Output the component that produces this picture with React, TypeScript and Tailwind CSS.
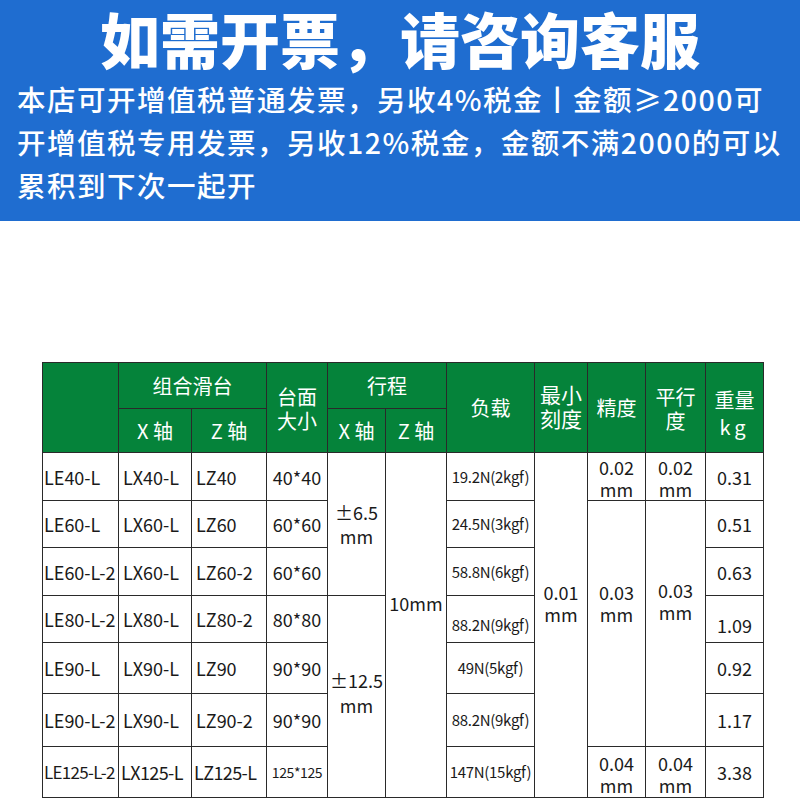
import React from "react";

const cjk = "font-['Noto_Sans_CJK_SC','Noto_Sans',sans-serif]";

function H({ className = "", children }: { className?: string; children?: React.ReactNode }) {
  return (
    <div
      className={`flex flex-col items-center justify-center text-center border-r border-b border-[#2a2a2a] bg-[#05833a] leading-[24px] text-white ${className}`}
    >
      {children}
    </div>
  );
}

function C({
  className = "",
  size = "text-[18px]",
  children,
}: {
  className?: string;
  size?: string;
  children?: React.ReactNode;
}) {
  return (
    <div
      className={`flex flex-col justify-center whitespace-nowrap border-r border-b border-[#2a2a2a] bg-white leading-[22px] text-[#1a1a1a] ${size} ${className}`}
    >
      {children}
    </div>
  );
}

const rows = [
  ["LE40-L", "LX40-L", "LZ40", "40*40"],
  ["LE60-L", "LX60-L", "LZ60", "60*60"],
  ["LE60-L-2", "LX60-L", "LZ60-2", "60*60"],
  ["LE80-L-2", "LX80-L", "LZ80-2", "80*80"],
  ["LE90-L", "LX90-L", "LZ90", "90*90"],
  ["LE90-L-2", "LX90-L", "LZ90-2", "90*90"],
  ["LE125-L-2", "LX125-L", "LZ125-L", "125*125"],
];

function Model({ r }: { r: string[] }) {
  const long = r[0].length > 8;
  return (
    <>
      <C
        size={long ? "text-[17px]" : "text-[18px]"}
        className={long ? "items-start pl-[1px] tracking-[-0.7px]" : "items-start pl-[1px]"}
      >
        {r[0]}
      </C>
      <C className={long ? "items-start pl-[2px] tracking-[-0.6px]" : "items-start pl-[4px]"}>{r[1]}</C>
      <C className={long ? "items-start pl-[2px] tracking-[-0.6px]" : "items-start pl-[4px]"}>{r[2]}</C>
      <C size={long ? "text-[14px]" : "text-[18px]"} className={long ? "items-center tracking-[-0.4px]" : "items-center"}>
        {r[3]}
      </C>
    </>
  );
}

function Load({ children }: { children: React.ReactNode }) {
  return (
    <C size="text-[15px]" className="items-center tracking-[-0.3px]">
      {children}
    </C>
  );
}

function Weight({ children }: { children: React.ReactNode }) {
  return <C className="items-center">{children}</C>;
}

function Two({ a, b }: { a: string; b: string }) {
  return (
    <span className="text-center">
      {a}
      <br />
      {b}
    </span>
  );
}

export default function App() {
  return (
    <div className={`w-[800px] bg-white ${cjk}`}>
      {/* banner */}
      <div className="h-[221px] bg-[#1f6dd0] text-white">
        <h1 className="pt-[2px] text-center text-[60px] font-black leading-[72px]">
          如需开票，请咨询客服
        </h1>
        <p className="mt-[3px] px-[17px] text-[28.5px] font-medium leading-[43px] tracking-[1.5px]">
          本店可开增值税普通发票，另收4%税金丨金额≥2000可
          <br />
          开增值税专用发票，另收12%税金，金额不满2000的可以
          <br />
          累积到下次一起开
        </p>
      </div>

      {/* spec table */}
      <div className="ml-[42px] mt-[141px] grid w-[722px] grid-cols-[76px_73px_75px_61px_58px_61px_88px_53px_58px_60px_58px] grid-rows-[46px_44px_48px_47px_48px_47px_51px_53px_51px] border-l border-t border-[#2a2a2a] text-[20px]">
        <H className="row-span-2" />
        <H className="col-span-2">组合滑台</H>
        <H className="row-span-2 pt-[2px]">
          <Two a="台面" b="大小" />
        </H>
        <H className="col-span-2">行程</H>
        <H className="row-span-2">负载</H>
        <H className="row-span-2 pb-[4px] text-[21px]">
          <Two a="最小" b="刻度" />
        </H>
        <H className="row-span-2">精度</H>
        <H className="row-span-2 pt-[2px]">
          <Two a="平行" b="度" />
        </H>
        <H className="row-span-2 pt-[10px] leading-[27px]">
          <span className="text-center">
            重量
            <br />
            <span className="tracking-[4px]">kg</span>
          </span>
        </H>
        <H>X 轴</H>
        <H>Z 轴</H>
        <H>X 轴</H>
        <H>Z 轴</H>

        {/* row 1 */}
        <Model r={rows[0]} />
        <C className="row-span-3 items-center leading-[24px]">
          <Two a="±6.5" b="mm" />
        </C>
        <C className="row-span-7 items-center pb-[44px]">10mm</C>
        <Load>19.2N(2kgf)</Load>
        <C className="row-span-7 items-center pb-[45px]">
          <Two a="0.01" b="mm" />
        </C>
        <C className="items-center pt-[3px]">
          <Two a="0.02" b="mm" />
        </C>
        <C className="items-center pt-[3px]">
          <Two a="0.02" b="mm" />
        </C>
        <Weight>0.31</Weight>

        {/* row 2 */}
        <Model r={rows[1]} />
        <Load>24.5N(3kgf)</Load>
        <C className="row-span-5 items-center pb-[42px]">
          <Two a="0.03" b="mm" />
        </C>
        <C className="row-span-5 items-center pb-[45px]">
          <Two a="0.03" b="mm" />
        </C>
        <Weight>0.51</Weight>

        {/* row 3 */}
        <Model r={rows[2]} />
        <Load>58.8N(6kgf)</Load>
        <Weight>0.63</Weight>

        {/* row 4 */}
        <Model r={rows[3]} />
        <C className="row-span-4 items-center pb-[8px] leading-[25px]">
          <Two a="±12.5" b="mm" />
        </C>
        <Load>
          <span className="pt-[12px]">88.2N(9kgf)</span>
        </Load>
        <Weight>
          <span className="pt-[12px]">1.09</span>
        </Weight>

        {/* row 5 */}
        <Model r={rows[4]} />
        <Load>49N(5kgf)</Load>
        <Weight>0.92</Weight>

        {/* row 6 */}
        <Model r={rows[5]} />
        <Load>88.2N(9kgf)</Load>
        <Weight>1.17</Weight>

        {/* row 7 */}
        <Model r={rows[6]} />
        <Load>147N(15kgf)</Load>
        <C className="items-center pt-[3px]">
          <Two a="0.04" b="mm" />
        </C>
        <C className="items-center pt-[3px]">
          <Two a="0.04" b="mm" />
        </C>
        <Weight>3.38</Weight>
      </div>
    </div>
  );
}
